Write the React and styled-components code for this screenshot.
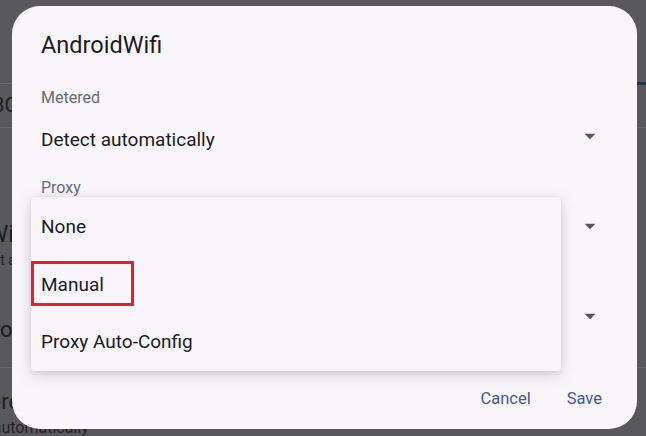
import React from 'react';
import styled, { createGlobalStyle } from 'styled-components';

const GlobalStyle = createGlobalStyle`
  html, body { margin: 0; padding: 0; background: #59585c; }
  body { font-family: Roboto, "Noto Sans", sans-serif; }
`;

const Screen = styled.div`
  position: relative;
  width: 646px;
  height: 436px;
  overflow: hidden;
  background: #59585c;
`;

/* page behind the scrim, already dimmed */
const Backdrop = styled.div`
  display: flex;
  flex-direction: column;
  color: #1d1c20;
`;

const TopBar = styled.div`
  height: 84px;
  box-sizing: border-box;
  border-bottom: 1px solid #69686c;
  display: flex;
  justify-content: flex-end;
  align-items: flex-end;
`;

const ActiveTab = styled.div`
  width: 96px;
  height: 3px;
  margin-bottom: -2px;
  background: #27304a;
`;

const BgRow = styled.div`
  height: 43px;
  border-bottom: 1px solid #69686c;
  display: flex;
  align-items: center;
`;

const BgSection = styled.div`
  display: flex;
  flex-direction: column;
  border-bottom: ${p => (p.$divider ? '1px solid #69686c' : 'none')};
  padding-bottom: ${p => p.$pb || 0}px;
`;

const BgText = styled.div`
  font-size: ${p => p.$size}px;
  line-height: ${p => p.$lh}px;
  margin-top: ${p => p.$mt || 0}px;
  margin-left: ${p => p.$shift}px;
  white-space: nowrap;
  color: ${p => (p.$muted ? '#232226' : '#1d1c20')};
`;

const Dialog = styled.div`
  position: absolute;
  left: 12px;
  top: 6px;
  width: 625px;
  height: 423px;
  box-sizing: border-box;
  border-radius: 28px;
  background: #f8f6fb;
  padding: 23px 34px 10.5px 29px;
  display: flex;
  flex-direction: column;
`;

const Title = styled.div`
  font-size: 23.5px;
  line-height: 32px;
  color: #1c1b1f;
  margin-bottom: 26.5px;
`;

const Field = styled.div`
  display: flex;
  flex-direction: column;
  height: 90px;
`;

const Label = styled.div`
  font-size: 16px;
  line-height: 20px;
  color: #6b6a6f;
  margin-bottom: 20.5px;
`;

const ValueRow = styled.div`
  display: flex;
  align-items: center;
  justify-content: space-between;
  height: 24px;
`;

const Value = styled.div`
  font-size: 19px;
  line-height: 24px;
  color: #1c1b1f;
`;

const Caret = styled.svg`
  width: 26px;
  height: 26px;
  margin-bottom: 9px;
  flex: none;
`;

const Actions = styled.div`
  margin-top: auto;
  display: flex;
  justify-content: flex-end;
  gap: 12px;
  margin-right: -11px;
`;

const TextButton = styled.button`
  border: none;
  background: none;
  padding: 0 12px;
  height: 40px;
  font-family: Roboto, sans-serif;
  font-size: 16.5px;
  font-weight: 400;
  line-height: 40px;
  color: #3f5895;
  cursor: pointer;
`;

const Menu = styled.div`
  position: absolute;
  left: 19px;
  top: 191px;
  width: 530px;
  padding-top: 1px;
  border-radius: 4px;
  background: #f7f5fa;
  box-shadow: 0 4px 16px rgba(0, 0, 0, 0.16), 0 1px 4px rgba(0, 0, 0, 0.08);
  display: flex;
  flex-direction: column;
`;

const MenuItem = styled.div`
  position: relative;
  height: 57.5px;
  line-height: 57.5px;
  padding-left: 10px;
  font-size: 19px;
  color: #1c1b1f;
`;

const Highlight = styled.div`
  position: absolute;
  left: 0;
  top: 5.5px;
  width: 103px;
  height: 45px;
  box-sizing: border-box;
  border: 3px solid #e3212a;
`;

const DropCaret = () => (
  <Caret viewBox="0 0 24 24">
    <path d="M7 10l5 5 5-5z" fill="#57565b" />
  </Caret>
);

const fields = [
  { label: 'Metered', value: 'Detect automatically' },
  { label: 'Proxy', value: 'None' },
  { label: 'Privacy', value: 'Use randomized MAC' },
];

const options = ['None', 'Manual', 'Proxy Auto-Config'];

export default function App() {
  return (
    <Screen>
      <GlobalStyle />
      <Backdrop>
        <TopBar>
          <ActiveTab />
        </TopBar>
        <BgRow>
          <BgText $size={20} $lh={43} $shift={-21}>ABC</BgText>
        </BgRow>
        <BgSection $divider $pb={22.5}>
          <BgText $size={24} $lh={28} $mt={91.8} $shift={-13}>Wi-Fi</BgText>
          <BgText $size={14} $lh={20} $mt={2.4} $shift={-47} $muted>Connect automatically</BgText>
          <BgText $size={22} $lh={28} $mt={46.3} $shift={-21}>Proxy</BgText>
        </BgSection>
        <BgSection>
          <BgText $size={22} $lh={28} $mt={20.5} $shift={-48.6}>Metered</BgText>
          <BgText $size={16} $lh={20} $mt={1.5} $shift={-57.6} $muted>Detect automatically</BgText>
        </BgSection>
      </Backdrop>

      <Dialog>
        <Title>AndroidWifi</Title>
        {fields.map(f => (
          <Field key={f.label}>
            <Label>{f.label}</Label>
            <ValueRow>
              <Value>{f.value}</Value>
              <DropCaret />
            </ValueRow>
          </Field>
        ))}
        <Actions>
          <TextButton>Cancel</TextButton>
          <TextButton>Save</TextButton>
        </Actions>

        <Menu>
          {options.map(o => (
            <MenuItem key={o}>
              {o}
              {o === 'Manual' && <Highlight />}
            </MenuItem>
          ))}
        </Menu>
      </Dialog>
    </Screen>
  );
}
